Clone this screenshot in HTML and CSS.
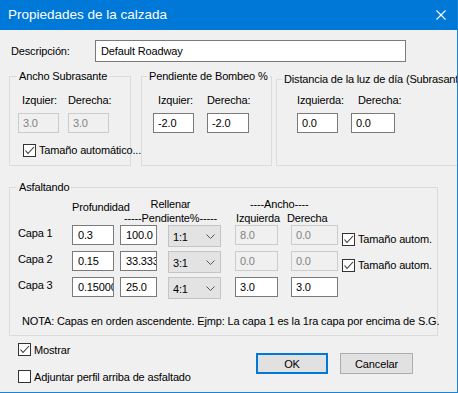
FILE: index.html
```html
<!DOCTYPE html>
<html lang="es">
<head>
<meta charset="utf-8">
<title>Propiedades de la calzada</title>
<link rel="stylesheet" href="styles.css">
</head>
<body>
<div class="window">
  <div class="titlebar">
    <span class="title">Propiedades de la calzada</span>
    <svg class="close" width="10" height="10" viewBox="0 0 10 10"><path d="M0.5 0.5 L9.5 9.5 M9.5 0.5 L0.5 9.5" stroke="#fff" stroke-width="1.1" fill="none"/></svg>
  </div>
  <div class="content">
    <div class="desc-row">
      <span class="desc-label">Descripción:</span>
      <div class="field desc-input">Default Roadway</div>
    </div>

    <div class="groups">
      <fieldset class="grp g1">
        <legend class="lg1">Ancho Subrasante</legend>
        <div class="glabels">
          <span class="g1-l1">Izquier:</span><span>Derecha:</span>
        </div>
        <div class="ginputs">
          <div class="field dis g1-i1">3.0</div>
          <div class="field dis g1-i2">3.0</div>
        </div>
        <div class="chkrow g1-chk">
          <span class="cb"><svg width="11" height="11" viewBox="0 0 11 11"><polyline points="1.5,5.5 4,8.5 10,2" fill="none" stroke="#333" stroke-width="1.1"/></svg></span>
          <span class="cbtext">Tamaño automático...</span>
        </div>
      </fieldset>

      <fieldset class="grp g2">
        <legend>Pendiente de Bombeo %</legend>
        <div class="glabels">
          <span class="g2-l1">Izquier:</span><span>Derecha:</span>
        </div>
        <div class="ginputs">
          <div class="field g2-i1">-2.0</div>
          <div class="field g2-i2">-2.0</div>
        </div>
      </fieldset>

      <fieldset class="grp g3">
        <legend>Distancia de la luz de día (Subrasante)</legend>
        <div class="glabels g3-labels">
          <span class="g3-l1">Izquierda:</span><span>Derecha:</span>
        </div>
        <div class="ginputs">
          <div class="field g3-i1">0.0</div>
          <div class="field g3-i2">0.0</div>
        </div>
      </fieldset>
    </div>

    <fieldset class="grp asf">
      <legend class="lg1">Asfaltando</legend>
      <div class="hdr hdr1">
        <span class="h-prof">Profundidad</span>
        <span class="h-rell">Rellenar</span>
        <span class="h-ancho">----Ancho----</span>
      </div>
      <div class="hdr hdr2">
        <span class="h-pend">-----Pendiente%-----</span>
        <span class="h-izq">Izquierda</span>
        <span class="h-der">Derecha</span>
      </div>

      <div class="row">
        <span class="capa">Capa 1</span>
        <div class="field f-prof">0.3</div>
        <div class="field f-pend">100.0</div>
        <div class="dd"><span>1:1</span><svg width="9" height="5" viewBox="0 0 9 5"><polyline points="0.5,0.5 4.5,4.5 8.5,0.5" fill="none" stroke="#555" stroke-width="1"/></svg></div>
        <div class="field dis f-izq">8.0</div>
        <div class="field dis f-der">0.0</div>
        <div class="chkrow rchk">
          <span class="cb"><svg width="11" height="11" viewBox="0 0 11 11"><polyline points="1.5,5.5 4,8.5 10,2" fill="none" stroke="#333" stroke-width="1.1"/></svg></span>
          <span class="cbtext">Tamaño autom.</span>
        </div>
      </div>

      <div class="row">
        <span class="capa">Capa 2</span>
        <div class="field f-prof">0.15</div>
        <div class="field f-pend">33.333</div>
        <div class="dd"><span>3:1</span><svg width="9" height="5" viewBox="0 0 9 5"><polyline points="0.5,0.5 4.5,4.5 8.5,0.5" fill="none" stroke="#555" stroke-width="1"/></svg></div>
        <div class="field dis f-izq">0.0</div>
        <div class="field dis f-der">0.0</div>
        <div class="chkrow rchk">
          <span class="cb"><svg width="11" height="11" viewBox="0 0 11 11"><polyline points="1.5,5.5 4,8.5 10,2" fill="none" stroke="#333" stroke-width="1.1"/></svg></span>
          <span class="cbtext">Tamaño autom.</span>
        </div>
      </div>

      <div class="row">
        <span class="capa">Capa 3</span>
        <div class="field f-prof">0.15000</div>
        <div class="field f-pend">25.0</div>
        <div class="dd"><span>4:1</span><svg width="9" height="5" viewBox="0 0 9 5"><polyline points="0.5,0.5 4.5,4.5 8.5,0.5" fill="none" stroke="#555" stroke-width="1"/></svg></div>
        <div class="field f-izq">3.0</div>
        <div class="field f-der">3.0</div>
      </div>

      <div class="nota">NOTA: Capas en orden ascendente. Ejmp: La capa 1 es la 1ra capa por encima de S.G.</div>
    </fieldset>

    <div class="footer">
      <div class="footchecks">
        <div class="chkrow">
          <span class="cb"><svg width="11" height="11" viewBox="0 0 11 11"><polyline points="1.5,5.5 4,8.5 10,2" fill="none" stroke="#333" stroke-width="1.1"/></svg></span>
          <span class="cbtext">Mostrar</span>
        </div>
        <div class="chkrow adj">
          <span class="cb"></span>
          <span class="cbtext">Adjuntar perfil arriba de asfaltado</span>
        </div>
      </div>
      <div class="buttons">
        <div class="btn ok">OK</div>
        <div class="btn">Cancelar</div>
      </div>
    </div>
  </div>
</div>
</body>
</html>
```

FILE: styles.css
```css
* { box-sizing: border-box; }
html, body { margin: 0; padding: 0; }
body {
  width: 458px;
  height: 393px;
  overflow: hidden;
  background: #f0f0f0;
  font-family: "Liberation Sans", Arial, sans-serif;
  font-size: 11px;
  letter-spacing: -0.15px;
  color: #000;
}
.window {
  width: 458px;
  height: 393px;
  border-right: 1px solid #1883d7;
  border-bottom: 1px solid #1883d7;
  background: #f0f0f0;
  overflow: hidden;
  display: flex;
  flex-direction: column;
}
.titlebar {
  flex: none;
  height: 30px;
  background: #0078d7;
  color: #fff;
  display: flex;
  align-items: center;
  justify-content: space-between;
  padding: 0 11px 0 8px;
  font-size: 13.5px;
  letter-spacing: 0;
}
.title { line-height: 18px; }
.close { display: block; }

.content {
  flex: 1;
  padding: 10px 0 0 9px;
}

.desc-row { display: flex; align-items: center; height: 22px; }
.desc-label { width: 86px; padding-left: 2px; }
.field {
  height: 20px;
  border: 1px solid #7a7a7a;
  background: #fff;
  padding-left: 4px;
  line-height: 18px;
  white-space: nowrap;
  overflow: hidden;
  flex: none;
}
.field.dis { border-color: #cccccc; color: #838383; background: #f0f0f0; }
.desc-input { width: 311px; height: 22px; line-height: 20px; padding-left: 5px; }

.groups { display: flex; align-items: flex-start; margin-top: 7px; }
.grp {
  margin: 0;
  padding: 0;
  border: 1px solid #dcdcdc;
  min-width: 0;
  flex: none;
}
.grp legend {
  padding: 0 2px;
  margin-left: 5px;
  line-height: 14px;
  white-space: nowrap;
}
.grp legend.lg1 { margin-left: 7px; }
.g1 { width: 122px; height: 97px; }
.g2 { width: 131px; height: 97px; margin-left: 10px; }
.g3 { width: 220px; height: 94px; margin-left: 4px; margin-top: 3px; }

.glabels { display: flex; height: 14px; line-height: 14px; margin-top: 10px; white-space: nowrap; }
.glabels.g3-labels { margin-top: 7px; }
.ginputs { display: flex; margin-top: 6px; }
.g1-l1 { margin-left: 12px; width: 46px; }
.g1-i1 { margin-left: 8px; width: 41px; }
.g1-i2 { margin-left: 9px; width: 41px; }
.g2-l1 { margin-left: 16px; width: 49px; }
.g2-i1 { margin-left: 11px; width: 41px; }
.g2-i2 { margin-left: 13px; width: 42px; }
.g3-l1 { margin-left: 20px; width: 61px; }
.g3-i1 { margin-left: 20px; width: 41px; }
.g3-i2 { margin-left: 13px; width: 44px; }

.chkrow { display: flex; align-items: center; height: 14px; white-space: nowrap; }
.g1-chk { margin-top: 10px; margin-left: 13px; }
.cb {
  width: 13px;
  height: 13px;
  border: 1px solid #333;
  background: #fff;
  flex: none;
  display: flex;
  align-items: center;
  justify-content: center;
}
.cb svg { display: block; }
.cbtext { margin-left: 3px; line-height: 14px; }

.asf { width: 429px; height: 156px; margin-top: 14px; }
.hdr { display: flex; height: 14px; line-height: 14px; white-space: nowrap; }
.hdr1 { margin-top: 3px; }
.h-prof { margin-left: 62px; width: 48px; padding-top: 3px; }
.h-rell { width: 101px; text-align: center; }
.h-ancho { margin-left: 29px; }
.h-pend { margin-left: 110px; width: 101px; text-align: center; }
.h-izq { margin-left: 15px; width: 51px; }

.row { display: flex; align-items: flex-start; height: 26px; }
.capa { width: 62px; padding-left: 8px; margin-top: 1px; line-height: 14px; flex: none; }
.f-prof { width: 42px; padding-left: 5px; }
.f-pend { width: 37px; margin-left: 6px; padding-left: 5px; }
.dd {
  flex: none;
  width: 53px;
  height: 22px;
  margin-left: 11px;
  background: #e3e3e3;
  border: 1px solid #c4c4c4;
  display: flex;
  align-items: center;
  justify-content: space-between;
  padding: 2px 5px 0 4px;
}
.dd svg { display: block; margin-top: -2px; }
.f-izq { width: 43px; margin-left: 14px; }
.f-der { width: 47px; margin-left: 13px; }
.rchk { margin-left: 4px; margin-top: 7px; }

.nota { margin-top: 11px; padding-left: 12px; line-height: 14px; white-space: nowrap; }

.footer { display: flex; align-items: flex-start; }
.footchecks { padding-left: 9px; padding-top: 7px; }
.footchecks .chkrow { height: 13px; }
.adj { margin-top: 14px; }
.buttons { margin-left: auto; margin-right: 44px; margin-top: 17px; display: flex; }
.btn {
  width: 73px;
  height: 21px;
  background: #e1e1e1;
  border: 1px solid #adadad;
  display: flex;
  align-items: center;
  justify-content: center;
  margin-left: 12px;
}
.btn.ok { width: 72px; border: 2px solid #0078d7; margin-left: 0; }
```
